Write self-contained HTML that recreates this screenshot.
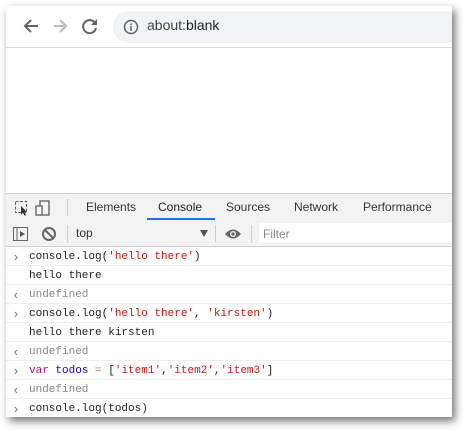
<!DOCTYPE html><html><head><style>
body{margin:0;width:472px;height:437px;background:#fff;position:relative;overflow:hidden;font-family:"Liberation Sans",sans-serif}
.win{position:absolute;left:6px;top:6px;width:446px;height:411px;background:#fff;box-shadow:3px 4px 8px rgba(0,0,0,.55);overflow:hidden}
.addr{position:absolute;left:107px;top:5px;width:360px;height:32px;border-radius:16px;background:#f1f3f4}
.t{position:absolute;white-space:nowrap}
.tabs{position:absolute;left:0;top:187px;width:446px;height:27px;background:#f3f3f3;border-top:1px solid #d0d0d0;border-bottom:1px solid #d0d0d0}
.tb{position:absolute;left:0;top:215px;width:446px;height:25px;background:#f3f3f3;border-bottom:1px solid #d0d0d0}
.row{position:absolute;left:0;width:446px;height:18px;border-bottom:1px solid #eee;font-family:"Liberation Mono",monospace;font-size:11px;line-height:21px;color:#222}
.row span.p{position:absolute;left:6px;color:#777;font-size:13px}
.row span.c{position:absolute;left:23px}
.s{color:#c41a16}.k{color:#aa0d91}.v{color:#1c00cf}.g{color:#888}
</style></head><body><div class="win">
<svg class="t" style="left:14px;top:10px" width="90" height="20" viewBox="0 0 90 20"><path d="M18 10H6M11 4L5 10l6 6" stroke="#5f6368" stroke-width="2" fill="none"/><path d="M34 10h12M40 4l6 6-6 6" stroke="#bbb" stroke-width="2" fill="none"/><path d="M75 7A6.5 6.5 0 1 0 76 12" stroke="#5f6368" stroke-width="2" fill="none"/><path d="M77 3v6h-6z" fill="#5f6368"/></svg>
<div class="addr"></div>
<svg class="t" style="left:117px;top:13px" width="16" height="16"><circle cx="8" cy="8" r="6.5" stroke="#5f6368" stroke-width="1.5" fill="none"/><path d="M8 7v5M8 4.5v1.5" stroke="#5f6368" stroke-width="1.5"/></svg>
<div class="t" style="left:141px;top:11px;font-size:14px;color:#444">about:<span style="color:#202124">blank</span></div>
<div style="position:absolute;left:0;top:41px;width:446px;height:1px;background:#ddd"></div>
<div class="tabs">
<svg class="t" style="left:8px;top:6px" width="40" height="17"><rect x="1.5" y="1.5" width="11" height="11" fill="none" stroke="#666" stroke-dasharray="3 1.5"/><path d="M7 6l6 6-2.5 0 1.5 3-1.5.7-1.5-3-2 2z" fill="#333"/><rect x="26" y="1" width="9" height="14" fill="none" stroke="#666" stroke-width="1.4"/><rect x="22" y="6" width="6" height="9" fill="#fff" stroke="#666" stroke-width="1.4"/></svg>
<div class="t" style="left:61px;top:5px;width:1px;height:17px;background:#ccc"></div>
<div class="t" style="left:80px;top:6px;font-size:12px;color:#333">Elements</div>
<div class="t" style="left:152px;top:6px;font-size:12px;color:#222">Console</div>
<div class="t" style="left:141px;top:24px;width:68px;height:2px;background:#1a73e8"></div>
<div class="t" style="left:220px;top:6px;font-size:12px;color:#333">Sources</div>
<div class="t" style="left:288px;top:6px;font-size:12px;color:#333">Network</div>
<div class="t" style="left:357px;top:6px;font-size:12px;color:#333">Performance</div>
</div>
<div class="tb">
<svg class="t" style="left:7px;top:5px" width="50" height="16"><rect x="0.5" y="1.5" width="14" height="13" fill="none" stroke="#666"/><path d="M4 2v12" stroke="#666"/><path d="M7 5l5 3-5 3z" fill="#555"/><circle cx="36" cy="8" r="6" fill="none" stroke="#666" stroke-width="2"/><path d="M32 4l8 8" stroke="#666" stroke-width="2"/></svg>
<div class="t" style="left:61px;top:4px;width:1px;height:17px;background:#ccc"></div>
<div class="t" style="left:70px;top:5px;font-size:12px;color:#333">top</div>
<div class="t" style="left:194px;top:9px;border-left:4px solid transparent;border-right:4px solid transparent;border-top:7px solid #555;width:0"></div>
<div class="t" style="left:209px;top:4px;width:1px;height:17px;background:#ccc"></div>
<svg class="t" style="left:218px;top:6px" width="18" height="14"><path d="M1 7Q9-2 17 7Q9 16 1 7z" fill="#666"/><circle cx="9" cy="7" r="3" fill="#f3f3f3"/><circle cx="9" cy="7" r="1.6" fill="#666"/></svg>
<div class="t" style="left:245px;top:4px;width:1px;height:17px;background:#ccc"></div>
<div class="t" style="left:253px;top:2px;width:193px;height:20px;background:#fff"></div>
<div class="t" style="left:257px;top:6px;font-size:12px;color:#888">Filter</div>
</div>
<div class="row" style="top:241px"><span class="p">›</span><span class="c">console.log(<span class="s">'hello there'</span>)</span></div>
<div class="row" style="top:260px"><span class="c">hello there</span></div>
<div class="row" style="top:279px"><span class="p">‹</span><span class="c g">undefined</span></div>
<div class="row" style="top:298px"><span class="p">›</span><span class="c">console.log(<span class="s">'hello there'</span>, <span class="s">'kirsten'</span>)</span></div>
<div class="row" style="top:317px"><span class="c">hello there kirsten</span></div>
<div class="row" style="top:336px"><span class="p">‹</span><span class="c g">undefined</span></div>
<div class="row" style="top:355px"><span class="p">›</span><span class="c"><span class="k">var</span> <span class="v">todos</span> <span style="color:#a67f59">=</span> [<span class="s">'item1'</span>,<span class="s">'item2'</span>,<span class="s">'item3'</span>]</span></div>
<div class="row" style="top:374px"><span class="p">‹</span><span class="c g">undefined</span></div>
<div class="row" style="top:393px"><span class="p">›</span><span class="c">console.log(todos)</span></div>
</div></body></html>
